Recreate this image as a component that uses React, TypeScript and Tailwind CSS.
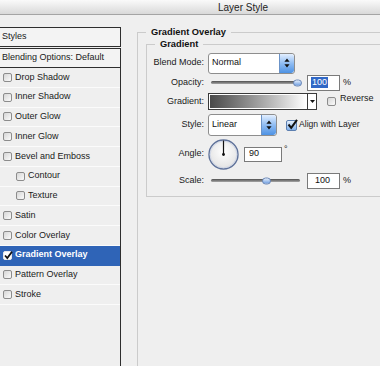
import React from "react";

function Check({ checked = false, dark = false }: { checked?: boolean; dark?: boolean }) {
  return (
    <span
      className={
        "block relative w-[9px] h-[9px] shrink-0 rounded-[2px] border " +
        (dark
          ? "border-[#e8e8e8] bg-white"
          : "border-[#8c8c8c] bg-gradient-to-br from-[#d6d6d6] to-[#fbfbfb]")
      }
    >
      {checked && (
        <svg className="absolute left-[0px] top-[-1px]" width="9" height="9" viewBox="0 0 9 9">
          <path d="M1 4.5L3.3 7L8 0.8" stroke="#111" strokeWidth="1.8" fill="none" />
        </svg>
      )}
    </span>
  );
}

function Stepper() {
  return (
    <span className="w-[15px] h-full shrink-0 rounded-r-[3px] border-l border-[#6b93c8] bg-gradient-to-b from-[#e3efff] via-[#8fbcf2] to-[#4d92e4] flex items-center justify-center">
      <svg width="6" height="10" viewBox="0 0 6 10">
        <path d="M3 0.5L5.6 3.8H0.4Z M3 9.5L0.4 6.2H5.6Z" fill="#111" />
      </svg>
    </span>
  );
}

function Slider({ thumb }: { thumb: string }) {
  return (
    <div className="relative ml-[3px] w-[89px] h-[3px] rounded-full bg-gradient-to-b from-[#4f4f4f] to-[#a8a8a8]">
      <span
        className={
          "absolute top-1/2 -translate-y-1/2 w-[9px] h-[7px] rounded-full border border-[#6b88b8] bg-gradient-to-b from-[#e4eefc] to-[#6f9ee0] " +
          thumb
        }
      />
    </div>
  );
}

function Field({ w, children }: { w: string; children: React.ReactNode }) {
  return (
    <div className={"h-[16px] border border-[#7a7a7a] bg-white flex items-center pl-[3px] text-[9px] text-[#111] " + w}>
      {children}
    </div>
  );
}

function Label({ children }: { children: React.ReactNode }) {
  return <span className="w-[57px] mr-[4px] text-right shrink-0 text-[9px] text-[#1a1a1a]">{children}</span>;
}

const rows: { name: string; indent?: boolean; sel?: boolean }[] = [
  { name: "Drop Shadow" },
  { name: "Inner Shadow" },
  { name: "Outer Glow" },
  { name: "Inner Glow" },
  { name: "Bevel and Emboss" },
  { name: "Contour", indent: true },
  { name: "Texture", indent: true },
  { name: "Satin" },
  { name: "Color Overlay" },
  { name: "Gradient Overlay", sel: true },
  { name: "Pattern Overlay" },
  { name: "Stroke" },
];

export default function App() {
  return (
    <div className="w-[380px] h-[366px] overflow-hidden bg-[#efefef] font-['Liberation_Sans',Arial,sans-serif] text-[9px] text-[#1a1a1a] flex flex-col">
      {/* title bar */}
      <div className="h-[15px] shrink-0 border-b border-[#a4a4a4] bg-gradient-to-b from-[#fafafa] to-[#d9d9d9] flex items-center pl-[218px] text-[10px] text-[#222]">
        Layer Style
      </div>

      <div className="flex flex-1 min-h-0">
        {/* left column */}
        <div className="w-[121px] shrink-0 flex flex-col mt-[12px]">
          <div className="h-[20px] border border-l-0 border-[#2e2e2e] flex items-center pl-[2px] bg-[#f3f3f3]">Styles</div>
          <div className="h-[20px] mt-[1px] border border-l-0 border-[#2e2e2e] flex items-center pl-[2px] bg-[#f3f3f3]">
            Blending Options: Default
          </div>
          <div className="flex-1 border-r border-[#2e2e2e] flex flex-col">
            {rows.map((r) => (
              <div
                key={r.name}
                className={
                  "h-[19.75px] shrink-0 border-b flex items-center " +
                  (r.indent ? "pl-[16px] " : "pl-[3px] ") +
                  (r.sel ? "bg-[#2f64b7] border-[#2f64b7] text-white font-bold" : "border-[#fbfbfb]")
                }
              >
                <Check checked={r.sel} dark={r.sel} />
                <span className="ml-[3px]">{r.name}</span>
              </div>
            ))}
          </div>
        </div>

        {/* right column */}
        <div className="ml-[16px] mt-[12px] w-[260px] shrink-0">
          <fieldset className="border border-r-0 border-b-0 border-[#cbcbcb] h-[400px] p-0 m-0">
            <legend className="ml-[8px] px-[5px] font-bold text-[9.3px] leading-[11px] text-[#111]">Gradient Overlay</legend>
            <div className="pl-[8px] pt-[1px]">
              <fieldset className="border border-r-0 border-[#cbcbcb] p-0 m-0">
                <legend className="ml-[8px] px-[5px] font-bold text-[9.3px] leading-[11px] text-[#111]">Gradient</legend>
                <div className="flex flex-col pt-[2px] pb-[5px]">
                  {/* Blend mode */}
                  <div className="h-[22px] flex items-center">
                    <Label>Blend Mode:</Label>
                    <div className="w-[87px] h-[21px] rounded-[3px] border border-[#8e8e8e] bg-white flex items-center overflow-hidden">
                      <span className="flex-1 pl-[3px] text-[9px] text-[#111]">Normal</span>
                      <Stepper />
                    </div>
                  </div>
                  {/* Opacity */}
                  <div className="h-[17px] flex items-center">
                    <Label>Opacity:</Label>
                    <Slider thumb="left-[82px]" />
                    <div className="ml-[7px]">
                      <Field w="w-[33px]">
                        <span className="bg-[#3168c6] text-white px-[1px] leading-[11px]">100</span>
                      </Field>
                    </div>
                    <span className="ml-[3px]">%</span>
                  </div>
                  {/* Gradient */}
                  <div className="h-[21px] flex items-center">
                    <Label>Gradient:</Label>
                    <div className="w-[109px] h-[17px] border border-[#3a3a3a] flex bg-white">
                      <div className="flex-1 m-[1px] bg-gradient-to-r from-[#4a4a4a] to-[#ffffff]" />
                      <div className="w-[9px] border-l border-[#3a3a3a] flex items-center justify-center">
                        <svg width="5" height="3" viewBox="0 0 5 3">
                          <path d="M0 0H5L2.5 3Z" fill="#111" />
                        </svg>
                      </div>
                    </div>
                    <span className="ml-[10px]">
                      <Check />
                    </span>
                    <span className="ml-[4px] -mt-[5px] text-[9px]">Reverse</span>
                  </div>
                  {/* Style */}
                  <div className="h-[26px] flex items-center">
                    <Label>Style:</Label>
                    <div className="w-[69px] h-[22px] rounded-[3px] border border-[#8e8e8e] bg-white flex items-center overflow-hidden">
                      <span className="flex-1 pl-[3px] text-[9px] text-[#111]">Linear</span>
                      <Stepper />
                    </div>
                    <span className="ml-[9px] relative w-[11px] h-[11px] rounded-[2px] border border-[#5c7fb0] bg-gradient-to-b from-[#e6f0fc] to-[#7fb0ec]">
                      <svg className="absolute left-[0px] top-[-2px]" width="11" height="11" viewBox="0 0 11 11">
                        <path d="M1.5 5.5L4.2 8.8L10 0.8" stroke="#111" strokeWidth="2" fill="none" />
                      </svg>
                    </span>
                    <span className="ml-[2px] -mt-[2px] text-[8.6px]">Align with Layer</span>
                  </div>
                  {/* Angle */}
                  <div className="h-[32px] flex items-center">
                    <Label>Angle:</Label>
                    <svg width="31" height="31" viewBox="0 0 31 31" className="shrink-0">
                      <defs>
                        <radialGradient id="dg" cx="50%" cy="40%" r="60%">
                          <stop offset="0%" stopColor="#ffffff" />
                          <stop offset="100%" stopColor="#e2e2e2" />
                        </radialGradient>
                      </defs>
                      <circle cx="15.5" cy="15.5" r="14.5" fill="url(#dg)" stroke="#5f729a" strokeWidth="1.4" />
                      <circle cx="15.5" cy="15.5" r="13.3" fill="none" stroke="#c9d2e4" strokeWidth="0.8" />
                      <line x1="15.5" y1="15.5" x2="15.5" y2="1.5" stroke="#111" strokeWidth="1.2" />
                      <circle cx="15.5" cy="15.5" r="1.4" fill="#111" />
                    </svg>
                    <div className="ml-[5px]">
                      <div className="w-[38px] h-[15px] border border-[#7a7a7a] bg-white flex items-center pl-[4px] text-[9px] text-[#111]">
                        90
                      </div>
                    </div>
                    <span className="ml-[2px] self-start mt-[5px] text-[9px]">°</span>
                  </div>
                  {/* Scale */}
                  <div className="h-[21px] flex items-center">
                    <Label>Scale:</Label>
                    <Slider thumb="left-[51px]" />
                    <div className="ml-[7px]">
                      <Field w="w-[33px]">
                        <span className="pl-[4px]">100</span>
                      </Field>
                    </div>
                    <span className="ml-[3px]">%</span>
                  </div>
                </div>
              </fieldset>
            </div>
          </fieldset>
        </div>
      </div>
    </div>
  );
}
